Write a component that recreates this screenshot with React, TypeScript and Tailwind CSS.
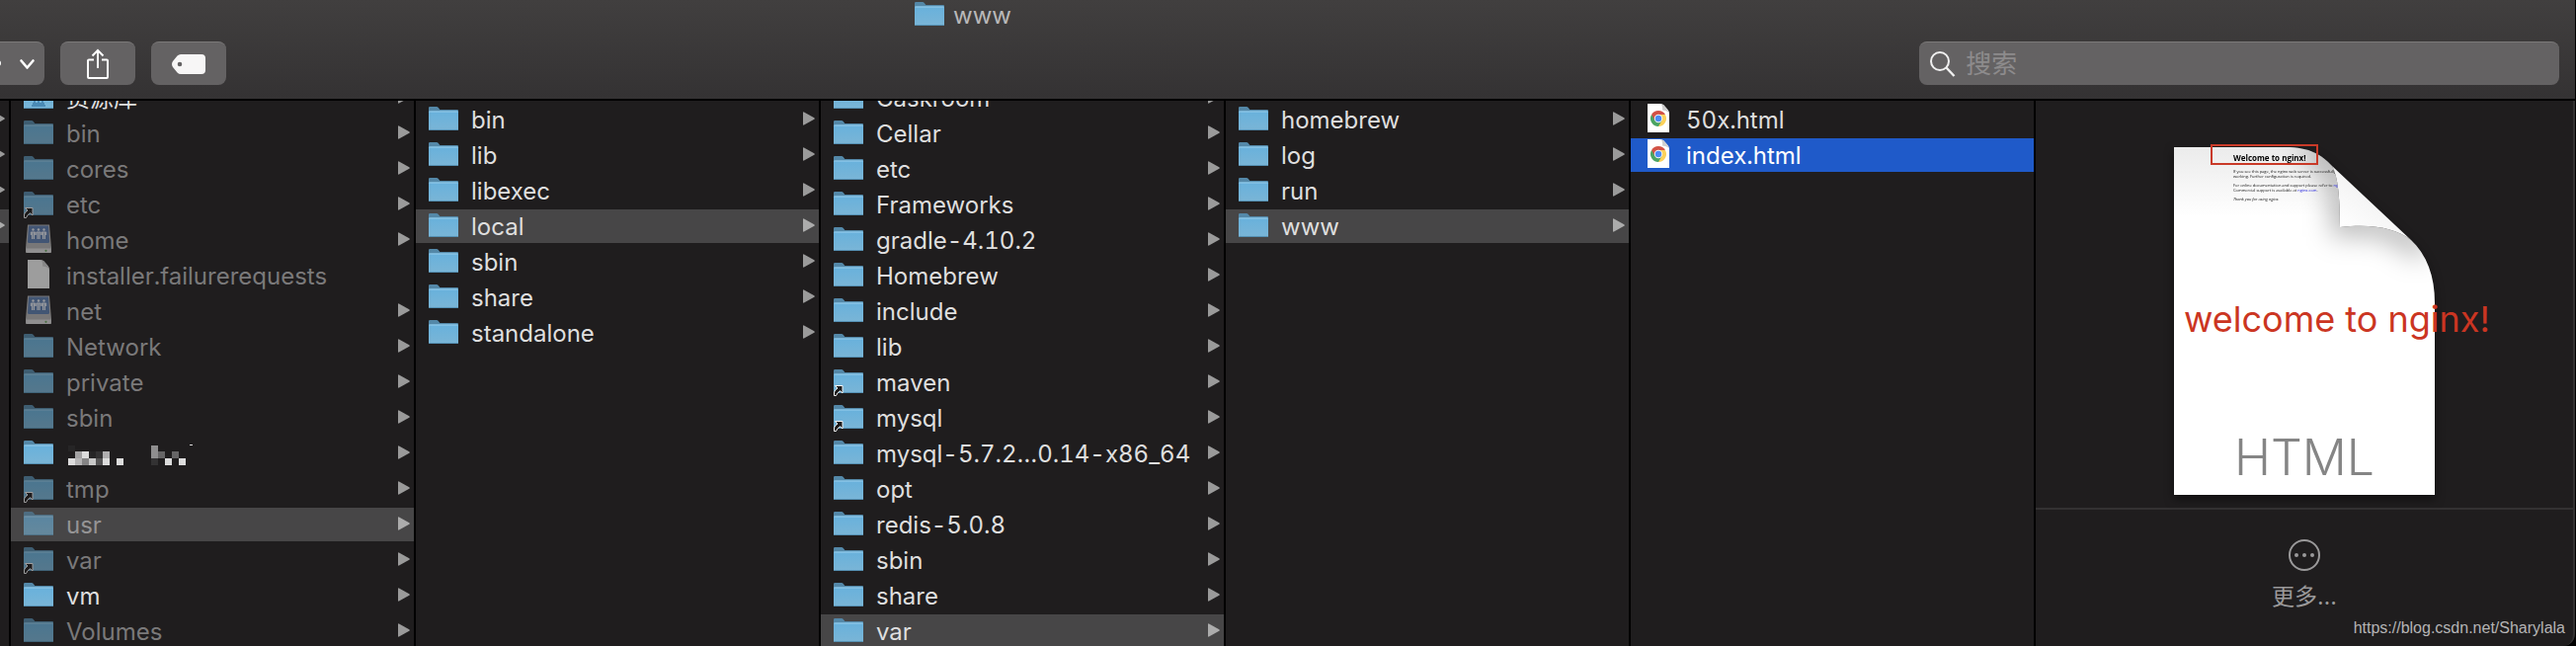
import { useState } from 'react';
import clsx from 'clsx';

type Kind = 'folder' | 'library' | 'drive' | 'file' | 'html';

interface Entry {
  name: string;
  kind?: Kind;
  dim?: boolean;
  alias?: boolean;
  masked?: boolean;
}

interface ColumnData {
  id: string;
  scrolled?: boolean;
  selected: string;
  active?: boolean;
  entries: Entry[];
}

const COLUMNS: ColumnData[] = [
  {
    id: 'root',
    scrolled: true,
    selected: 'usr',
    entries: [
      { name: '资源库', kind: 'library' },
      { name: 'bin', dim: true },
      { name: 'cores', dim: true },
      { name: 'etc', dim: true, alias: true },
      { name: 'home', dim: true, kind: 'drive' },
      { name: 'installer.failurerequests', dim: true, kind: 'file' },
      { name: 'net', dim: true, kind: 'drive' },
      { name: 'Network', dim: true },
      { name: 'private', dim: true },
      { name: 'sbin', dim: true },
      { name: 'masked', masked: true },
      { name: 'tmp', dim: true, alias: true },
      { name: 'usr', dim: true },
      { name: 'var', dim: true, alias: true },
      { name: 'vm' },
      { name: 'Volumes', dim: true },
    ],
  },
  {
    id: 'usr',
    selected: 'local',
    entries: [
      { name: 'bin' },
      { name: 'lib' },
      { name: 'libexec' },
      { name: 'local' },
      { name: 'sbin' },
      { name: 'share' },
      { name: 'standalone' },
    ],
  },
  {
    id: 'local',
    scrolled: true,
    selected: 'var',
    entries: [
      { name: 'Caskroom' },
      { name: 'Cellar' },
      { name: 'etc' },
      { name: 'Frameworks' },
      { name: 'gradle-4.10.2' },
      { name: 'Homebrew' },
      { name: 'include' },
      { name: 'lib' },
      { name: 'maven', alias: true },
      { name: 'mysql', alias: true },
      { name: 'mysql-5.7.2…0.14-x86_64' },
      { name: 'opt' },
      { name: 'redis-5.0.8' },
      { name: 'sbin' },
      { name: 'share' },
      { name: 'var' },
    ],
  },
  {
    id: 'var',
    selected: 'www',
    entries: [{ name: 'homebrew' }, { name: 'log' }, { name: 'run' }, { name: 'www' }],
  },
  {
    id: 'www',
    selected: 'index.html',
    active: true,
    entries: [
      { name: '50x.html', kind: 'html' },
      { name: 'index.html', kind: 'html' },
    ],
  },
];

function FolderShape() {
  return (
    <>
      <path d="M1 8V4.2Q1 3 2.2 3H9q1 0 1.6.8L12.4 6H30q1 0 1 1v3H1z" fill="#5488a8" />
      <path d="M1 8.5Q1 7.5 2 7.5H30q1 0 1 1V26q0 1-1 1H2q-1 0-1-1z" fill="url(#folder-front)" />
      <path d="M1.5 8H30.5" stroke="#9bd0ee" strokeWidth="1" />
      <path d="M1.5 26.5H30.5" stroke="#5590b3" strokeWidth="1" />
    </>
  );
}

function DriveShape() {
  return (
    <>
      <path d="M5 .5H27L29 24V28q0 1-1 1H4q-1 0-1-1V24z" fill="#b4b4b4" />
      <path d="M3.4 24.500H28.6V28q0 1-1 1H4.4q-1 0-1-1z" fill="#dcdcdc" />
      <path d="M6 1.5H26L27 17.5Q27 19 25.5 19H6.500Q5 19 5 17.5z" fill="#5a7cae" />
      {[10.5, 16, 21.5].map((x) => (
        <g key={x} stroke="#e6ebf2" fill="#e6ebf2">
          <circle cx={x} cy="5.500" r="1.2" stroke="none" />
          <path d={`M${x - 2.2} 11V8H${x + 2.2}V11`} fill="none" strokeWidth="1" />
          <path d={`M${x - 0.9} 8V15M${x + 0.9} 8V15`} strokeWidth="1.2" />
        </g>
      ))}
      <circle cx="23.500" cy="26.800" r="1.100" fill="#66a55a" />
    </>
  );
}

function PageShape({ chrome }: { chrome?: boolean }) {
  return (
    <>
      <path d="M5 0H18Q20 0 21.500 1.500L25.500 6Q27 8 27 10V29H5z" fill={chrome ? '#fff' : '#f2f2f2'} />
      <path d="M18.500 0Q20.500 2 20 6.500Q24 6.500 27 9Q26 7 25 5.800L21.500 1.500Q20 0 18.500 0z" fill="#cfcfcf" />
      {chrome && (
        <g>
          <path d="M16 15L9.070 11A8 8 0 0 1 22.930 11z" fill="#d25246" />
          <path d="M16 15L22.930 11A8 8 0 0 1 16 23z" fill="#fbd15b" />
          <path d="M16 15L16 23A8 8 0 0 1 9.070 11z" fill="#4ba463" />
          <path d="M16 11H22.930L19.500 17L16 23z" fill="#fbd15b" />
          <path d="M12.500 17L9.070 11L16 11z" fill="#d25246" />
          <path d="M12.500 17L16 19L19.500 17L16 23z" fill="#4ba463" />
          <circle cx="16" cy="15" r="4.200" fill="#f3f3f3" />
          <circle cx="16" cy="15" r="3.200" fill="#4c8bf5" />
        </g>
      )}
    </>
  );
}

function EntryIcon({ kind = 'folder', dim, alias }: { kind?: Kind; dim?: boolean; alias?: boolean }) {
  return (
    <svg viewBox="0 0 32 32" className="size-8 shrink-0" aria-hidden="true">
      <g opacity={dim ? 0.6 : 1}>
        {(kind === 'folder' || kind === 'library') && <FolderShape />}
        {kind === 'library' && (
          <path d="M9 24H23M10 22H22M12 14V21M16 14V21M20 14V21" stroke="#3c7cab" strokeWidth="1.500" />
        )}
        {kind === 'drive' && <DriveShape />}
        {kind === 'file' && <PageShape />}
        {kind === 'html' && <PageShape chrome />}
        {alias && (
          <path
            d="M2.500 19.500H10V27L7.600 24.700Q4.500 26.500 3.500 29.500H1.500V26Q2.500 23.500 5 22z"
            fill="#1c1b1c"
            stroke="#f2f2f2"
            strokeWidth="1"
          />
        )}
      </g>
    </svg>
  );
}

function Arrow({ selected }: { selected?: boolean }) {
  return (
    <svg
      viewBox="0 0 12 16"
      className={clsx('h-4 w-3 shrink-0', selected ? 'text-[#acacac]' : 'text-[#9a9a9a]')}
      aria-hidden="true"
    >
      <path d="M0 1Q0 0 1 .4L11.300 6.200Q12.300 7 11.300 7.800L1 13.600Q0 14 0 13z" fill="currentColor" />
    </svg>
  );
}

// pixelated name of a private folder
function MaskedName() {
  const cells: [number, number, number, string][] = [
    [2, 9, 6, '#262526'],
    [9, 15, 7, '#a3a2a3'],
    [16, 15, 7, '#dcdcdc'],
    [23, 15, 7, '#262526'],
    [30, 15, 7, '#333233'],
    [37, 15, 7, '#b0afb0'],
    [2, 22, 7, '#dcdcdc'],
    [9, 22, 7, '#b5b4b5'],
    [16, 22, 7, '#858485'],
    [23, 22, 7, '#c8c8c8'],
    [30, 22, 7, '#555455'],
    [37, 22, 7, '#dcdcdc'],
    [51, 22, 7, '#dcdcdc'],
    [86, 9, 13, '#8f8e8f'],
    [93, 15, 7, '#666566'],
    [107, 15, 7, '#666566'],
    [86, 22, 7, '#333233'],
    [100, 22, 7, '#dcdcdc'],
    [114, 22, 7, '#dcdcdc'],
  ];
  return (
    <svg viewBox="0 0 128 34" className="h-[34px] w-32" shapeRendering="crispEdges" aria-hidden="true">
      {cells.map(([x, y, h, fill]) => (
        <rect key={`${x}-${y}`} x={x} y={y} width="7" height={h} fill={fill} />
      ))}
      <rect x="125" y="8" width="3" height="1" fill="#dcdcdc" />
    </svg>
  );
}

function Column({ data }: { data: ColumnData }) {
  const [selected, setSelected] = useState(data.selected);

  return (
    <section aria-label={data.id} className="w-[410px] shrink-0 overflow-hidden border-r-2 border-black">
      <ul className={clsx('flex flex-col gap-0.5', data.scrolled ? '-mt-5' : 'pt-0.5')}>
        {data.entries.map((e) => {
          const on = e.name === selected;
          const leaf = e.kind === 'file' || e.kind === 'html';
          return (
            <li key={e.name}>
              <button
                type="button"
                aria-label={e.masked ? e.name : undefined}
                onClick={() => setSelected(e.name)}
                className={clsx(
                  'flex h-[34px] w-full items-center gap-3 pr-1 pl-3 text-left text-2xl leading-8 tabular-nums',
                  on && (data.active ? 'bg-[#1f5ac9]' : 'bg-[#474647]'),
                  on && data.active && 'text-white',
                  e.dim && (on ? 'text-[#959495]' : 'text-[#7a797a]'),
                  !e.dim && !(on && data.active) && 'text-[#dfdfdf]',
                )}
              >
                <EntryIcon kind={e.kind} dim={e.dim} alias={e.alias} />
                {e.masked ? (
                  <MaskedName />
                ) : (
                  <span className="pt-0.5 whitespace-nowrap">{e.name}</span>
                )}
                <span className="ml-auto">{!leaf && <Arrow selected={on} />}</span>
              </button>
            </li>
          );
        })}
      </ul>
    </section>
  );
}

function PagePreview() {
  return (
    <svg viewBox="0 0 264 352" className="h-[352px] w-[264px] drop-shadow-[0_4px_5px_rgba(0,0,0,0.5)]">
      <defs>
        <linearGradient id="page-top" x1="0" y1="0" x2="0" y2="1">
          <stop offset="0" stopColor="#ebebeb" />
          <stop offset="0.2" stopColor="#fff" />
        </linearGradient>
        <linearGradient id="page-curl" x1="0.700" y1="0.300" x2="0.200" y2="0.900">
          <stop offset="0" stopColor="#e2e2e2" />
          <stop offset="0.3" stopColor="#f4f4f4" />
          <stop offset="1" stopColor="#fff" />
        </linearGradient>
        <filter id="page-soft" x="-50%" y="-50%" width="200%" height="200%">
          <feGaussianBlur stdDeviation="14" />
        </filter>
        <clipPath id="page-body">
          <path d="M0 0H113C138 0 150 8 160 19C166 30 168 50 168 81C200 77 225 82 240 94C256 109 264 130 264 158V352H0z" />
        </clipPath>
      </defs>
      <g clipPath="url(#page-body)">
        <rect width="264" height="352" fill="url(#page-top)" />
        <path
          d="M135 -4C160 8 172 30 172 78C205 72 235 84 252 106"
          fill="none"
          stroke="#000"
          strokeOpacity="0.320"
          strokeWidth="22"
          filter="url(#page-soft)"
        />
        <g fontFamily="'Open Sans', 'Noto Sans', sans-serif" fill="#111">
          <text x="60" y="14" fontSize="8" fontWeight="700" fill="#000">
            Welcome to nginx!
          </text>
          <g fontSize="4">
            <text x="60" y="26">If you see this page, the nginx web server is successfully installed and</text>
            <text x="60" y="31">working. Further configuration is required.</text>
            <text x="60" y="40">
              For online documentation and support please refer to <tspan fill="#2222dd">nginx.org</tspan>
            </text>
            <text x="60" y="45">
              Commercial support is available at <tspan fill="#2222dd">nginx.com</tspan>.
            </text>
            <text x="60" y="54" fontStyle="italic">
              Thank you for using nginx.
            </text>
          </g>
        </g>
      </g>
      <path d="M160 19L240 94C225 82 200 77 168 81C168 50 166 30 160 19z" fill="url(#page-curl)" />
      <text
        x="132"
        y="332"
        textAnchor="middle"
        fontFamily="Inter, sans-serif"
        fontWeight="300"
        fontSize="50"
        fill="#858585"
      >
        HTML
      </text>
    </svg>
  );
}

export default function App() {
  const [query, setQuery] = useState('');

  return (
    <div className="flex h-screen flex-col overflow-hidden border-r border-black bg-black font-[Inter,'Noto_Sans_CJK_SC',sans-serif]">
      <svg className="absolute size-0" aria-hidden="true">
        <defs>
          <linearGradient id="folder-front" x1="0" y1="0" x2="0" y2="1">
            <stop offset="0" stopColor="#68b1dc" />
            <stop offset="1" stopColor="#7ab5d6" />
          </linearGradient>
        </defs>
      </svg>

      <header className="shrink-0 border-b-2 border-b-black bg-linear-to-b from-[#413f3f] to-[#343233]">
        <h1 className="flex h-[42px] items-start justify-center gap-2 pr-[658px] text-2xl leading-8 text-[#b9b8b9]">
          <span className="-mt-px h-8">
            <EntryIcon />
          </span>
          www
        </h1>
        <div className="flex items-center gap-4 pr-4 pb-3.5">
          <button
            type="button"
            aria-label="Actions"
            className="flex h-11 w-[45px] items-center rounded-r-lg border-t border-[#7b7979] bg-[#646263]"
          >
            <svg viewBox="0 0 45 44" className="h-11 w-[45px]" fill="none" aria-hidden="true">
              <circle cx="-2" cy="21" r="3" fill="#fff" />
              <path d="M21.500 18.500L27.500 25.500L33.500 18.500" stroke="#fff" strokeWidth="2.600" strokeLinecap="round" strokeLinejoin="round" />
            </svg>
          </button>
          <button
            type="button"
            aria-label="Share"
            className="flex h-11 w-[76px] items-center justify-center rounded-lg border-t border-[#7b7979] bg-[#646263]"
          >
            <svg viewBox="0 0 24 32" className="h-8 w-6" fill="none" stroke="#fff" strokeWidth="2" aria-hidden="true">
              <path d="M8 11.500H3Q2 11.500 2 12.500V29Q2 30 3 30H21Q22 30 22 29V12.500Q22 11.500 21 11.500H16" />
              <path d="M12 20V2M6.500 7.500L12 2L17.500 7.500" />
            </svg>
          </button>
          <button
            type="button"
            aria-label="Tags"
            className="flex h-11 w-[76px] items-center justify-center rounded-lg border-t border-[#7b7979] bg-[#646263]"
          >
            <svg viewBox="0 0 34 20" className="h-5 w-[34px]" aria-hidden="true">
              <path
                d="M9 0H30Q34 0 34 4V16Q34 20 30 20H9Q7 20 5.500 18.500L1 13Q-1 10 1 7L5.500 1.500Q7 0 9 0zM8 7.700a2.300 2.300 0 1 0 0 4.600a2.300 2.300 0 1 0 0-4.600z"
                fill="#f7f6f6"
                fillRule="evenodd"
              />
            </svg>
          </button>
          <label className="ml-auto flex h-11 w-1/4 items-center gap-2.5 rounded-lg border-t border-[#7b7979] bg-[#646263] px-2.5">
            <svg viewBox="0 0 27 28" className="h-7 w-[27px] shrink-0" fill="none" stroke="#f0f0f0" strokeWidth="2" aria-hidden="true">
              <circle cx="11" cy="11" r="9" />
              <path d="M17.500 17.500L25.500 26" strokeWidth="2.400" />
            </svg>
            <input
              type="search"
              aria-label="搜索"
              placeholder="搜索"
              value={query}
              onChange={(e) => setQuery(e.target.value)}
              className="min-w-0 flex-1 bg-transparent text-[26px] leading-9 text-white outline-none placeholder:text-[#8d8b8c]"
            />
          </label>
        </div>
      </header>

      <main className="flex min-h-0 flex-1 overflow-hidden rounded-br-xl bg-[#1f1d1e]">
        <div className="flex w-[11px] shrink-0 flex-col gap-0.5 overflow-hidden border-r-2 border-black pt-0.5">
          {[0, 1, 2, 3].map((i) => (
            <div key={i} className={clsx('flex h-[34px] items-center justify-end pr-1', i === 3 && 'bg-[#474647]')}>
              <Arrow selected={i === 3} />
            </div>
          ))}
        </div>

        {COLUMNS.map((c) => (
          <Column key={c.id} data={c} />
        ))}

        <aside className="relative flex min-w-0 flex-1 flex-col items-center rounded-br-xl border-r-2 border-[#333132] pt-[47px]">
          <div className="relative">
            <PagePreview />
            <div className="absolute -top-[3px] left-[37px] h-[21px] w-[109px] border-2 border-[#c93a28]" />
            <p className="absolute top-[150px] left-2.5 text-4xl leading-[48px] whitespace-nowrap text-[#cb3522]">
              welcome to nginx!
            </p>
          </div>
          <hr className="mt-[13px] w-full border-t-2 border-[#333132]" />
          <button type="button" className="mt-7 flex flex-col items-center gap-1.5 text-[23px] leading-9 text-[#9a999a]">
            <svg viewBox="0 0 36 36" className="size-9" fill="none" stroke="currentColor" strokeWidth="2" aria-hidden="true">
              <circle cx="18" cy="18" r="15" />
              <g fill="currentColor" stroke="none">
                <circle cx="10" cy="18" r="2" />
                <circle cx="18" cy="18" r="2" />
                <circle cx="26" cy="18" r="2" />
              </g>
            </svg>
            更多…
          </button>
          <a
            href="https://blog.csdn.net/Sharylala"
            className="absolute right-2 bottom-2 font-['Liberation_Sans',sans-serif] text-base leading-5 text-[#b5b4b5]"
          >
            https://blog.csdn.net/Sharylala
          </a>
        </aside>
      </main>
    </div>
  );
}
